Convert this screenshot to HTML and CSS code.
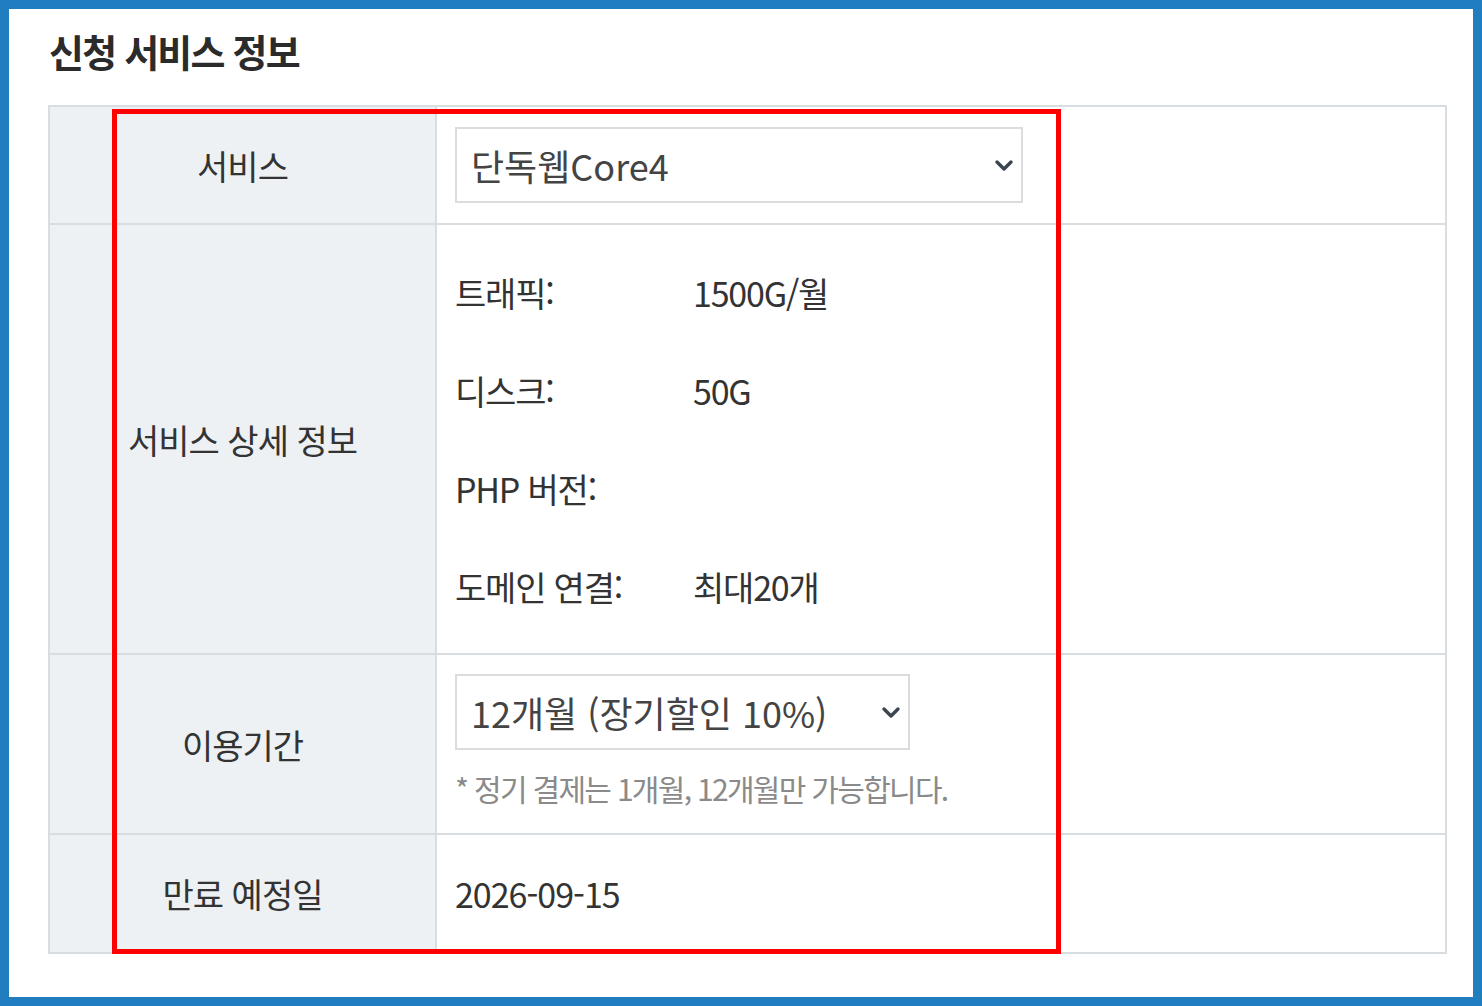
FILE: index.html
```html
<!DOCTYPE html>
<html lang="ko">
<head>
<meta charset="utf-8">
<title>신청 서비스 정보</title>
<link rel="stylesheet" href="styles.css">
</head>
<body>
<div class="frame">
  <div class="panel">
    <h2 class="title">신청 서비스 정보</h2>
    <div class="table-wrap">
      <table class="info">
        <tr class="row-service">
          <th>서비스</th>
          <td>
            <div class="select-wrap wide">
              <select class="sel">
                <option>단독웹Core4</option>
              </select>
              <svg class="chev" width="20" height="13" viewBox="0 0 20 13"><path d="M3 3 L10 10 L17 3" fill="none" stroke="#3d4650" stroke-width="3.4" stroke-linecap="round" stroke-linejoin="round"/></svg>
            </div>
          </td>
        </tr>
        <tr class="row-detail">
          <th>서비스 상세 정보</th>
          <td>
            <div class="details">
              <span class="k">트래픽:</span><span class="v">1500G/월</span>
              <span class="k">디스크:</span><span class="v">50G</span>
              <span class="k">PHP 버전:</span><span class="v"></span>
              <span class="k">도메인 연결:</span><span class="v">최대20개</span>
            </div>
          </td>
        </tr>
        <tr class="row-period">
          <th>이용기간</th>
          <td>
            <div class="select-wrap narrow">
              <select class="sel">
                <option>12개월 (장기할인 10%)</option>
              </select>
              <svg class="chev" width="20" height="13" viewBox="0 0 20 13"><path d="M3 3 L10 10 L17 3" fill="none" stroke="#3d4650" stroke-width="3.4" stroke-linecap="round" stroke-linejoin="round"/></svg>
            </div>
            <p class="note">* 정기 결제는 1개월, 12개월만 가능합니다.</p>
          </td>
        </tr>
        <tr class="row-end">
          <th>만료 예정일</th>
          <td class="date">2026-09-15</td>
        </tr>
      </table>
      <div class="highlight"></div>
    </div>
  </div>
</div>
</body>
</html>
```
FILE: styles.css
```css
html, body {
  margin: 0;
  padding: 0;
}
body {
  background: #1f7dc0;
  font-family: "Noto Sans CJK KR", "Noto Sans", sans-serif;
  color: #333;
}
.frame {
  padding: 9px;
  height: 1006px;
  box-sizing: border-box;
}
.panel {
  background: #fff;
  height: 100%;
  box-sizing: border-box;
  padding: 19px 26px 0 39px;
}
.title {
  margin: 0 0 0 1px;
  font-size: 38px;
  font-weight: 700;
  letter-spacing: -1.8px;
  line-height: 46px;
  color: #2b2b2b;
  height: 77px;
}
.table-wrap {
  position: relative;
}
.info {
  width: 100%;
  border-collapse: collapse;
  border: 2px solid #d8dde2;
}
.info th, .info td {
  border: 2px solid #d8dde2;
  padding: 0;
}
.info th {
  width: 385px;
  background: #edf1f4;
  font-weight: 400;
  font-size: 34px;
  letter-spacing: -1px;
  color: #333;
  text-align: center;
}
.info td {
  padding-left: 18px;
  text-align: left;
}
.row-service td {
  height: 116px;
}
.select-wrap {
  position: relative;
  height: 76px;
}
.select-wrap.wide { width: 568px; }
.select-wrap.narrow { width: 455px; }
.sel {
  appearance: none;
  -webkit-appearance: none;
  width: 100%;
  height: 100%;
  border: 2px solid #dcdcdc;
  border-radius: 0;
  background: #fff;
  font-family: "Noto Sans CJK KR", "Noto Sans", sans-serif;
  font-size: 36px;
  color: #444;
  padding: 0 0 0 14px;
  letter-spacing: 0;
  outline: none;
}
.chev {
  position: absolute;
  right: 9px;
  top: 32px;
}
.details {
  display: grid;
  grid-template-columns: 238px auto;
  row-gap: 50px;
  padding: 44px 0 42px;
  font-size: 34px;
  letter-spacing: -1.2px;
  line-height: 48px;
  color: #333;
}
.row-period td {
  padding-top: 19px;
  height: 180px;
  box-sizing: border-box;
  vertical-align: top;
}
.note {
  margin: 18px 0 0;
  font-size: 30px;
  letter-spacing: -1.7px;
  color: #8a8a8a;
  line-height: 40px;
}
.row-end td, .row-end th {
  height: 117px;
}
.date {
  font-size: 34px;
  letter-spacing: -1px;
  color: #333;
}
.highlight {
  position: absolute;
  left: 64px;
  top: 4px;
  width: 939px;
  height: 835px;
  border: 5px solid #ff0000;
  pointer-events: none;
}
```
